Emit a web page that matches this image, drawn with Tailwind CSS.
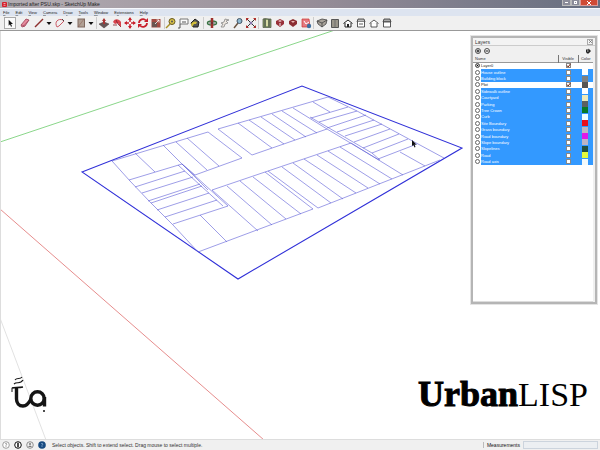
<!DOCTYPE html>
<html lang="en">
<head>
  <meta charset="UTF-8">
  <meta name="viewport" content="width=device-width, initial-scale=1.0">
  <title>Imported after PSU.skp - SketchUp Make</title>
  <script src="https://cdn.jsdelivr.net/npm/@tailwindcss/browser@4"></script>
</head>
<body class="h-screen flex flex-col overflow-hidden bg-white font-['Liberation_Sans',sans-serif] text-[5px] leading-[6px] text-[#333]">

  <!-- title bar -->
  <header class="h-2 shrink-0 flex items-center gap-px pl-[2px] bg-linear-to-r from-[#b3adb3] via-[#998f99] to-[#666e80]">
    <svg class="size-[5px]" viewBox="0 0 5 5"><rect width="5" height="5" rx="1" fill="#d5202c"/><path d="M1.5 1.5h2M1.5 3.3h2" stroke="#fff" stroke-width=".6"/></svg>
    <h1 class="flex-1 text-[#222]">Imported after PSU.skp - SketchUp Make</h1>
    <div class="flex self-start h-[6px] mr-[2px] text-white">
      <button aria-label="Minimize" class="w-[9px] bg-[#8b8c99] border border-t-0 border-[#bbb] flex items-center justify-center"><span class="w-[3px] h-px bg-white"></span></button>
      <button aria-label="Maximize" class="w-[9px] bg-[#8b8c99] border border-t-0 border-[#bbb] flex items-center justify-center"><span class="size-[3px] border border-white"></span></button>
      <button aria-label="Close" class="w-[18px] bg-[#cf4a35] border border-t-0 border-[#d99] flex items-center justify-center">
        <svg class="size-[4px]" viewBox="0 0 4 4"><path d="M0 0l4 4M4 0L0 4" stroke="#fff"/></svg>
      </button>
    </div>
  </header>

  <!-- menu -->
  <nav class="h-2 shrink-0 flex items-center gap-[6px] pl-[3px] bg-[#dde4f0] border-t border-[#f6f8fc] text-[4px] text-[#222] [&_u]:decoration-[#222]/40">
    <a href="#"><u>F</u>ile</a>
    <a href="#"><u>E</u>dit</a>
    <a href="#"><u>V</u>iew</a>
    <a href="#"><u>C</u>amera</a>
    <a href="#">D<u>r</u>aw</a>
    <a href="#"><u>T</u>ools</a>
    <a href="#"><u>W</u>indow</a>
    <a href="#">E<u>x</u>tensions</a>
    <a href="#"><u>H</u>elp</a>
  </nav>

  <!-- toolbar -->
  <div class="h-[15px] shrink-0 flex items-center pl-1 bg-[#f0f0f0] border-b border-[#999]">
    <div class="flex items-center">
      <button aria-label="Select" class="size-3 p-px bg-[#fafafa] border border-[#aaa]"><svg viewBox="0 0 12 12"><path d="M4 1v9l2-2 1.500 3.500 1.500-.7L7.500 7.500h3z" fill="#111"/></svg></button>
      <button aria-label="Eraser" class="size-3 ml-[3px]"><svg viewBox="0 0 12 12"><path d="M2 8l5-6 3 1-4 6-3 1z" fill="#e58a9c" stroke="#9c3f55" stroke-width=".8"/><path d="M2 8l3 .5L10 3M5 8.500V10" stroke="#9c3f55" stroke-width=".6" fill="none"/></svg></button>
      <button aria-label="Line" class="size-3 ml-[2px]"><svg viewBox="0 0 12 12"><path d="M2 10L10 2" stroke="#8c2f2c" stroke-width="1.500"/></svg></button>
      <button aria-label="Line tools" class="w-2 h-3"><svg viewBox="0 0 8 12"><path d="M1.500 5h5L4 8z" fill="#111"/></svg></button>
      <button aria-label="Arc" class="size-3 ml-px"><svg viewBox="0 0 12 12"><path d="M3 10C0 5 4 1 9 3l1 1-5 5z" fill="none" stroke="#cc5a66"/><path d="M8 2l2 2" stroke="#444"/></svg></button>
      <button aria-label="Arc tools" class="w-2 h-3"><svg viewBox="0 0 8 12"><path d="M1.500 5h5L4 8z" fill="#111"/></svg></button>
      <button aria-label="Rectangle" class="size-3 ml-px"><svg viewBox="0 0 12 12"><rect x="3" y="2" width="6.500" height="8" fill="#b0a094" stroke="#806a60"/><path d="M3 10l6-8" stroke="#8c5a50" stroke-width=".5"/></svg></button>
      <button aria-label="Shape tools" class="w-2 h-3"><svg viewBox="0 0 8 12"><path d="M1.500 5h5L4 8z" fill="#111"/></svg></button>
    </div>
    <div class="flex items-center gap-px ml-px pl-px border-l border-[#ccc]">
      <button aria-label="Push/Pull" class="size-3"><svg viewBox="0 0 12 12"><path d="M1 7l5-2 5 2-5 4z" fill="#655" stroke="#433" stroke-width=".5"/><path d="M6 1l2 3H7v3H5V4H4z" fill="#a33"/></svg></button>
      <button aria-label="Offset" class="size-3"><svg viewBox="0 0 12 12"><path d="M2 5c2-4 6-3 8 0v5L8 8 7 6 4 7z" fill="#d8434c"/><path d="M2 8l4 0M5 3l2 4 3 3" stroke="#7d2229" stroke-width=".8" fill="none"/></svg></button>
      <button aria-label="Move" class="size-3"><svg viewBox="0 0 12 12"><path d="M6 1v10M1 6h10" stroke="#c8202c" stroke-width="1.500"/><path d="M6 0l2 3H4zM6 12l2-3H4zM0 6l3-2v4zM12 6L9 4v4z" fill="#c8202c"/><circle cx="6" cy="6" r="1.200" fill="#fff"/></svg></button>
      <button aria-label="Rotate" class="size-3"><svg viewBox="0 0 12 12"><path d="M2 6a4 4 0 0 1 7-2.500M10 6a4 4 0 0 1-7 2.500" fill="none" stroke="#c8202c" stroke-width="1.800"/><path d="M11 1v4H7zM1 11V7h4z" fill="#c8202c"/></svg></button>
      <button aria-label="Scale" class="size-3"><svg viewBox="0 0 12 12"><rect x="1.500" y="2" width="9" height="8.500" fill="#a34a42"/><rect x="2" y="5" width="5" height="5" fill="#6b5550"/><path d="M5 7l4-4M9 3H6.500M9 3v2.500" stroke="#fff" stroke-width=".8"/></svg></button>
    </div>
    <div class="flex items-center ml-[2px] border-l border-[#ccc]">
      <button aria-label="Tape Measure" class="size-3"><svg viewBox="0 0 12 12"><path d="M5 7l-4 4" stroke="#a89024" stroke-width="1.500"/><circle cx="7" cy="4.500" r="3" fill="#d8c148" stroke="#665820"/><circle cx="7" cy="4.500" r="1" fill="#555"/></svg></button>
      <button aria-label="Text" class="size-3"><svg viewBox="0 0 12 12"><path d="M3 2h8v5H3z" fill="#fafafa" stroke="#777"/><path d="M5 5h4M3 7v4H1" stroke="#555" fill="none"/></svg></button>
      <button aria-label="Paint Bucket" class="size-3"><svg viewBox="0 0 12 12"><path d="M2 6l4-4 4 3-1 5H4z" fill="#555" stroke="#222"/><path d="M2 7c2-3 4-3 6-2l-1 2H5L3 10z" fill="#d1bd38"/></svg></button>
    </div>
    <div class="flex items-center gap-px ml-[2px] pl-[2px] border-l border-[#ccc]">
      <button aria-label="Orbit" class="size-3"><svg viewBox="0 0 12 12"><ellipse cx="6" cy="6" rx="4.500" ry="2" fill="none" stroke="#397243" stroke-width="1.500"/><path d="M6 1v10" stroke="#9c2f2c" stroke-width="2.500"/><path d="M3 6h6" stroke="#333" stroke-width=".8"/></svg></button>
      <button aria-label="Pan" class="size-3"><svg viewBox="0 0 12 12"><path d="M2 10l2-3-2-1 3-1 1-3 4 1-3 1 2 2-3 1-1 3z" fill="#ece6de" stroke="#888" stroke-width=".8"/></svg></button>
      <button aria-label="Zoom" class="size-3"><svg viewBox="0 0 12 12"><path d="M6 6l-4 5" stroke="#6c5540" stroke-width="1.500"/><circle cx="7.500" cy="4" r="2.500" fill="#8eb8cf" stroke="#456"/></svg></button>
      <button aria-label="Zoom Extents" class="size-3"><svg viewBox="0 0 12 12"><path d="M2 2l8 8M10 2l-8 8" stroke="#333"/><path d="M1 1h3L1 4zM11 1v3L8 1zM1 11V8l3 3zM11 11H8l3-3z" fill="#b5302f"/><circle cx="6" cy="6" r="1.500" fill="#87a"/></svg></button>
    </div>
    <div class="flex items-center gap-px ml-px pl-[2px] border-l border-[#ccc]">
      <button aria-label="Add Location" class="size-3"><svg viewBox="0 0 12 12"><path d="M2 2l2-.5 4 .5 2 0v8.500H2z" fill="#839b68" stroke="#4a5140" stroke-width=".7"/><path d="M4 2v8M8 2v8" stroke="#444"/><path d="M5 3h2v6H5z" fill="#d6d9a5"/></svg></button>
      <button aria-label="Get Models" class="size-3"><svg viewBox="0 0 12 12"><path d="M2 4l4-2 4 2v3l-4 3-4-3z" fill="#993038"/><path d="M4 4l2-1 2 1-2 1z" fill="#e8c0c0"/><path d="M6 6v3" stroke="#eee"/></svg></button>
      <button aria-label="Share Model" class="size-3"><svg viewBox="0 0 12 12"><path d="M2 4l4-2 4 2v3l-4 3-4-3z" fill="#8c2e32"/><path d="M4 4h4L6 6z" fill="#e9b5b0"/></svg></button>
      <button aria-label="Extension Warehouse" class="size-3"><svg viewBox="0 0 12 12"><path d="M2 2h7l1 8H2z" fill="#e57a7f" stroke="#c33" stroke-width=".7"/><path d="M4 4l2 3 3-2" stroke="#fff" fill="none"/><circle cx="9" cy="9" r="2.200" fill="#3d6f9f"/></svg></button>
    </div>
    <div class="flex items-center gap-px ml-px pl-[2px] border-l border-[#ccc]">
      <button aria-label="Iso" class="size-3"><svg viewBox="0 0 12 12"><path d="M1 4l5-2 5 1-1 4-4 3-4-3z" fill="#a9a39a" stroke="#444" stroke-width=".8"/><path d="M1 4l5 2 5-3M6 6v4" stroke="#444" stroke-width=".8" fill="none"/></svg></button>
      <button aria-label="Top" class="size-3"><svg viewBox="0 0 12 12"><path d="M2.500 2.500h7v8h-7z" fill="#99958a" stroke="#555"/><path d="M6 2v8" stroke="#666" stroke-width=".8"/></svg></button>
      <button aria-label="Front" class="size-3"><svg viewBox="0 0 12 12"><path d="M1.500 6.500L6 3l4.500 3.500M3 6v4h6V6" fill="#fff" stroke="#222"/><path d="M5 7h2v3H5z" fill="#222"/></svg></button>
      <button aria-label="Right" class="size-3"><svg viewBox="0 0 12 12"><path d="M2 5l1-3h6l1 3z" fill="#bbb" stroke="#333" stroke-width=".8"/><path d="M2.500 5v5h7V5M4 7h4" fill="#fff" stroke="#333" stroke-width=".8"/></svg></button>
      <button aria-label="Back" class="size-3"><svg viewBox="0 0 12 12"><path d="M1.500 6.500L6 3l4.500 3.500M3 6v4h6V6" fill="#fff" stroke="#333" stroke-width=".8"/></svg></button>
      <button aria-label="Left" class="size-3"><svg viewBox="0 0 12 12"><path d="M2 5l1-3h6l1 3z" fill="#aaa" stroke="#333" stroke-width=".8"/><path d="M2.500 5v5h7V5z" fill="#fff" stroke="#333" stroke-width=".8"/></svg></button>
    </div>
  </div>

  <!-- model view -->
  <main class="relative flex-1 min-h-0 border-l border-[#ddd]">
    <svg class="absolute inset-0 size-full" viewBox="1 31 599 408" preserveAspectRatio="xMinYMin slice" fill="none">
      <path d="M0 142L335 30" stroke="#6ccb6c" stroke-width=".8"/>
      <path d="M0 209L264 440" stroke="#e07070" stroke-width=".8"/>
      <path d="M0 318L46 440" stroke="#ccc" stroke-width=".6"/>
      <path d="M82 172L302 86L462 148L238 279Z" stroke="#3030d8" stroke-width="1.100"/>
      <g stroke="#5c5cd6" stroke-width=".6">
        <!-- north-west block -->
        <path d="M112 161L208 132L242 158L195 175L182 164M163 145L208 190M176 142L207 170M187 138L219 166M135 153L155 172"/>
        <!-- west block -->
        <path d="M112 161L130 181L150 202L173 225L198 252M129 180L182 164M135 187L185 171M142 193L193 177M148 201L200 184M151 203L202 186M157 210L209 193M165 217L217 200M173 224L228 206M178 165L223 206M182 164L228 206M200 215L227 242"/>
        <!-- south block -->
        <path d="M198 252L313 209L265 172M212 190L268 171L351 143M212 190L258 231M227 186L272 225M240 181L286 219M253 177L301 214"/>
        <!-- south-east block -->
        <path d="M268 171L318 208L440 160M282 167L331 203M293 163L343 199M304 159L356 193M317 155L368 188M328 151L380 184M340 147L392 179M351 143L403 175M400 152L425 166"/>
        <!-- north block -->
        <path d="M218 129L252 155L327 129M218 129L328 97M238 123L272 148M249 120L284 144M261 117L295 140M272 114L306 137M282 111L317 133M293 108L327 129L379 160"/>
        <!-- east block -->
        <path d="M328 97L357 111L444 158M313 102L330 112M310 117L372 153L380 160M311 118L348 107M319 122L357 111M327 128L366 115M337 132L374 120M345 136L382 124M354 142L390 129M363 148L399 134M372 153L408 139M378 159L417 144"/>
      </g>
      <path d="M412 140v6l1.500-1 1 2.500 1-.5-1-2.500h2z" fill="#111"/>
      <!-- studio mark -->
      <g stroke="#151515">
        <path d="M16.500 387v12c0 4 2.500 7 6.500 7s6-3 8-7" stroke-width="3.400"/>
        <circle cx="37.500" cy="398.500" r="6.700" stroke-width="3.400"/>
        <path d="M44.500 397v9.500" stroke-width="3.400"/>
        <path d="M12 388c2-1 6 0 11-1" stroke-width="1.600"/>
        <path d="M14 384c3-3 6 1 9-4M15 380c2-3 5 0 7-3" stroke-width="1.200"/>
        <path d="M12 388v4"/>
        <path d="M44 410v2" stroke-width="1.500"/>
      </g>
    </svg>

    <!-- layers window -->
    <section class="absolute top-[5px] right-[3px] w-[126px] h-[268px] flex flex-col bg-[#f0f0f0] border-2 border-[#b5b5b5] outline outline-[#e4e4e4] text-[4px] text-[#333]">
      <div class="h-2 shrink-0 flex items-center justify-between px-[2px] bg-[#f3f3f3] border-b border-[#ccc]">
        <h2 class="text-[5px]">Layers</h2>
        <button aria-label="Close layers" class="size-[6px] border border-[#aaa] flex items-center justify-center"><svg class="size-[3px]" viewBox="0 0 3 3"><path d="M0 0l3 3M3 0L0 3" stroke="#555" stroke-width=".6"/></svg></button>
      </div>
      <div class="h-[9px] shrink-0 flex items-center gap-[3px] px-[2px]">
        <button aria-label="Add layer" class="size-[6px]"><svg viewBox="0 0 6 6"><circle cx="3" cy="3" r="2.500" fill="#fff" stroke="#222" stroke-width=".8"/><path d="M3 1.500v3M1.500 3h3" stroke="#111"/></svg></button>
        <button aria-label="Delete layer" class="size-[6px]"><svg viewBox="0 0 6 6"><circle cx="3" cy="3" r="2.500" fill="#fff" stroke="#222" stroke-width=".8"/><path d="M1.500 3h3" stroke="#111"/></svg></button>
        <button aria-label="Details" class="size-[6px] ml-auto mr-[2px]"><svg viewBox="0 0 6 6"><path d="M1 1.500h2.500v-1L6 3 3.500 5.500H2L1 4z" fill="#222"/><path d="M2 3h1.500" stroke="#fff" stroke-width=".8"/></svg></button>
      </div>
      <div class="flex-1 mr-[2px] bg-white border-b border-[#ddd]">
        <table class="w-full h-[110px] table-fixed border-collapse leading-[5px]">
          <colgroup><col class="w-2"><col><col class="w-[20px]"><col class="w-[15px]"></colgroup>
          <thead class="bg-[#f0f0f0]">
            <tr class="h-[7px] border-b border-[#999]">
              <th colspan="2" class="p-0 pl-[2px] text-left font-normal">Name</th>
              <th class="p-0 border-l border-[#777] font-normal">Visible</th>
              <th class="p-0 border-l border-[#777] font-normal">Color</th>
            </tr>
          </thead>
          <tbody id="layers"></tbody>
        </table>
      </div>
    </section>

    <div class="absolute right-3 bottom-6 flex items-baseline font-['Liberation_Serif',serif] leading-10 text-black">
      <span class="text-[36px] font-bold [-webkit-text-stroke:1px_black]">Urban</span><span class="text-[34px]">LISP</span>
    </div>
  </main>

  <!-- status bar -->
  <footer class="h-[11px] shrink-0 flex items-center gap-[6px] px-[2px] bg-[#f0f0f0] border-t border-[#ddd]">
    <div class="flex items-center gap-1">
      <svg class="size-2" viewBox="0 0 8 8"><circle cx="4" cy="4" r="3.300" fill="#fff" stroke="#888" stroke-width=".8"/><path d="M3 3q1-1.500 2 0L4 4.500V6" fill="none" stroke="#888" stroke-width=".7"/></svg>
      <svg class="size-2" viewBox="0 0 8 8"><circle cx="4" cy="4" r="3.300" fill="#fff" stroke="#111"/><path d="M4 1.800v4.500" stroke="#111" stroke-width="1.500"/></svg>
      <svg class="size-2" viewBox="0 0 8 8"><circle cx="4" cy="4" r="3.300" fill="#eee" stroke="#777" stroke-width=".8"/><circle cx="4" cy="3" r="1" fill="#777"/><path d="M2 6q2-3 4 0z" fill="#777"/></svg>
      <svg class="size-2" viewBox="0 0 8 8"><circle cx="4" cy="4" r="3.800" fill="#174a80"/><path d="M3 3q1-1.500 2 0L4 4.500V6" fill="none" stroke="#8fb3d8" stroke-width=".7"/></svg>
    </div>
    <p class="flex-1">Select objects. Shift to extend select. Drag mouse to select multiple.</p>
    <div class="flex items-center gap-[3px]">
      <span class="w-px h-[6px] bg-[#bbb]"></span>
      <label for="measurements" class="text-[#111]">Measurements</label>
      <input id="measurements" type="text" class="w-[75px] h-2 bg-[#eceff2] border border-[#ccd4dd]">
    </div>
  </footer>

  <script>
    const layers = [
      { name: 'Layer0', color: '#ffffff', visible: true, active: true },
      { name: 'House outline', color: '#ffffff', selected: true },
      { name: 'Building block', color: '#808080', selected: true },
      { name: 'Plot', color: '#555555', visible: true },
      { name: 'Sidewalk outline', color: '#ffffff', selected: true },
      { name: 'Courtyard', color: '#eeeabb', selected: true },
      { name: 'Parking', color: '#5c6062', selected: true },
      { name: 'Tree Crown', color: '#067a28', selected: true },
      { name: 'Curb', color: '#f0ffff', selected: true },
      { name: 'Site Boundary', color: '#e8101e', selected: true },
      { name: 'Grass boundary', color: '#bcb8c0', selected: true },
      { name: 'Road boundary', color: '#e01ae8', selected: true },
      { name: 'Slope boundary', color: '#bcb4c4', selected: true },
      { name: 'Slopelines', color: '#24503c', selected: true },
      { name: 'Road', color: '#e4fa3c', selected: true },
      { name: 'Road axis', color: '#f4fafa', selected: true }
    ];

    document.getElementById('layers').innerHTML = layers.map((layer, i) => {
      const row = layer.selected ? 'bg-[#3399ff] text-white' : 'bg-white text-[#222]';
      return `
        <tr>
          <td class="p-0 bg-white"><input type="radio" name="active" aria-label="Draw on ${layer.name}" ${layer.active ? 'checked' : ''} class="block ml-[2px] size-[5px] appearance-none rounded-full border border-[#666] bg-white checked:bg-black checked:outline checked:-outline-offset-2 checked:outline-white"></td>
          <td class="p-0 ${row}"><label for="layer${i}" class="block">${layer.name}</label></td>
          <td class="p-0 ${row}"><div class="relative mx-auto size-[5px]"><input id="layer${i}" type="checkbox" ${layer.visible ? 'checked' : ''} class="block size-[5px] appearance-none border border-[#888] bg-white">${layer.visible ? '<svg class="absolute inset-0 size-[5px] pointer-events-none" viewBox="0 0 5 5"><path d="M1 2.500l1.200 1.500L4.500 .8" fill="none" stroke="#7a2a10"/></svg>' : ''}</div></td>
          <td class="p-0 ${row}"><div class="ml-1 size-[6px]" style="background:${layer.color}"></div></td>
        </tr>`;
    }).join('');
  </script>
</body>
</html>
